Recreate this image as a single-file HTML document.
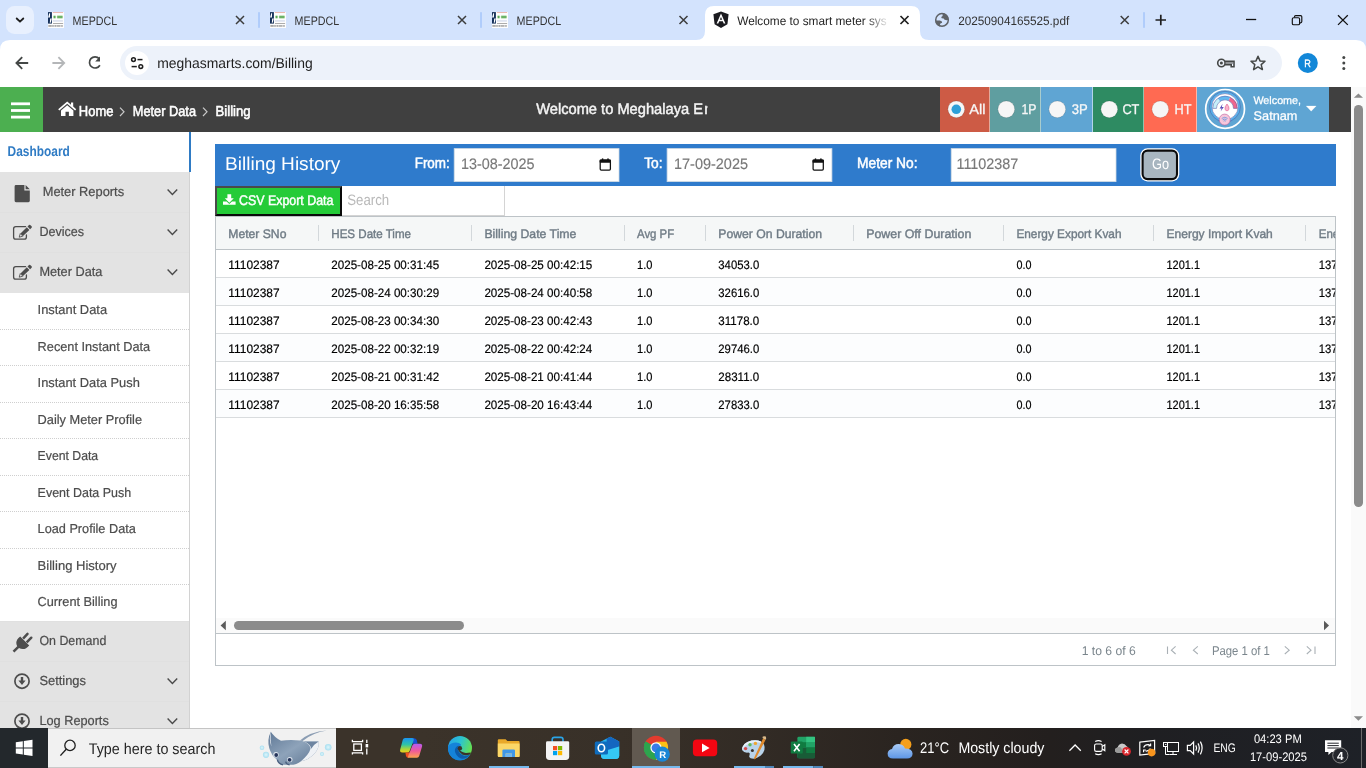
<!DOCTYPE html>
<html>
<head>
<meta charset="utf-8">
<title>Welcome to smart meter system</title>
<style>
*{box-sizing:border-box;margin:0;padding:0}
html,body{width:1366px;height:768px;overflow:hidden;background:#fff;font-family:"Liberation Sans",sans-serif;}
.abs{position:absolute}
svg{will-change:transform;text-rendering:geometricPrecision}
#root{position:relative;width:1366px;height:768px;overflow:hidden;background:#fff}
/* ---------- chrome tab strip ---------- */
#tabstrip{left:0;top:0;width:1366px;height:40px;background:#d3e3fd}
.tabtitle{position:absolute;top:12px;font-size:12.5px;color:#1f1f1f;white-space:nowrap;line-height:16px}
.tabsep{position:absolute;top:13px;width:2px;height:14px;background:#a8c7fa;border-radius:1px}
#toolbar{left:0;top:40px;width:1366px;height:47px;background:#fff}
#omnibox{left:120px;top:46px;width:1162px;height:34px;border-radius:17px;background:#edf2fa}
#url{left:157px;top:54px;font-size:14.5px;color:#1f1f1f;line-height:18px;white-space:nowrap}
/* ---------- app header ---------- */
#apphead{left:0;top:87px;width:1351px;height:45px;background:#404040}
#burger{left:0;top:87px;width:43px;height:45px;background:#4caf50}
.crumb{position:absolute;top:102px;font-size:15px;color:#fff;line-height:18px;white-space:nowrap;font-weight:bold}
.seg{position:absolute;top:87px;height:45px}
.seg span{position:absolute;top:13px;font-size:16px;line-height:18px;color:#f3f3f3}
.radio{position:absolute;top:13px;width:18px;height:18px;border-radius:50%;background:#f7f7f7;box-shadow:0 0 2px rgba(0,0,0,.25)}
/* ---------- sidebar ---------- */
#side{left:0;top:132px;width:190px;height:596px;background:#fff;overflow:hidden}
.mi{position:absolute;left:0;width:189px;height:40px;background:#e3e3e3}
.mi span{position:absolute;top:11px;font-size:15px;line-height:18px;color:#4a4a4a;white-space:nowrap}
.sub{position:absolute;left:0;width:189px;height:37px;background:#fff;border-bottom:1px dotted #d5d5d5}
.sub span{position:absolute;left:37px;top:9px;font-size:14px;line-height:18px;color:#444;white-space:nowrap}
/* ---------- content ---------- */
#bluebar{left:215px;top:144px;width:1121px;height:42px;background:#2f7bcc}
.lbl{position:absolute;top:154px;font-size:15px;font-weight:bold;color:#fff;line-height:18px;white-space:nowrap}
.inp{position:absolute;top:149px;height:32px;background:#fff;border:1px solid #ccc;font-size:15px;color:#7a7a7a;line-height:30px;padding-left:5px;white-space:nowrap}
#grid{left:215px;top:216px;width:1121px;height:450px;border:1px solid #bdc3c7;background:#fff;overflow:hidden}
.hrow{position:absolute;left:0;top:0;width:1119px;height:33px;background:#f5f7f7;border-bottom:1px solid #bdc3c7}
.hc{position:absolute;top:9px;font-size:13px;font-weight:bold;color:#73808a;line-height:16px;white-space:nowrap}
.hs{position:absolute;top:8px;width:1px;height:16px;background:#d4d9dc}
.row{position:absolute;left:0;width:1119px;height:28px;border-bottom:1px solid #d9dcde;background:#fff}
.row.odd{background:#fcfdfe}
.row span{position:absolute;top:6px;font-size:12.5px;line-height:16px;color:#000;white-space:nowrap}
/* ---------- taskbar ---------- */
#taskbar{left:0;top:728px;width:1366px;height:40px;background:#2a2624}
</style>
</head>
<body>
<div id="root">
<div id="tabstrip" class="abs"></div>
<div id="toolbar" class="abs"></div>
<div id="omnibox" class="abs"></div>
<svg class="abs" style="left:0;top:0" width="1366" height="87" viewBox="0 0 1366 87" font-family="Liberation Sans, sans-serif">
  <path d="M0 40 L0 50 Q0 40 10 40 Z" fill="#d3e3fd"/>
  <path d="M1366 40 L1366 50 Q1366 40 1356 40 Z" fill="#d3e3fd"/>
  <!-- tab search button -->
  <rect x="6" y="6" width="28" height="28" rx="8.5" fill="#e8f0fe"/>
  <path d="M16.7 18.5 L20 21.7 L23.3 18.5" fill="none" stroke="#1f1f1f" stroke-width="1.8" stroke-linecap="round" stroke-linejoin="round"/>
  <!-- active tab -->
  <path d="M696 40 Q705 40 705 31 L705 15 Q705 6 714 6 L911 6 Q920 6 920 15 L920 31 Q920 40 929 40 Z" fill="#fff"/>
  <!-- favicons: MEPDCL -->
  
  <g transform="translate(48,12)"><rect x="0" y="0" width="16" height="16" fill="#fdfdfd"/><rect x="0" y="0.1" width="3.9" height="11.5" fill="#14305a"/><path d="M1.2 1.3 L2.1 1.3 L1.9 5.4 L0.1 5.4 Z M2.2 6.4 L3.8 6.4 L2.7 10.8 L1.8 10.8 Z" fill="#fff"/><rect x="4.9" y="0.1" width="10.2" height="0.9" fill="#e9b1a9"/><rect x="5.3" y="3.6" width="2.5" height="2.8" rx="0.6" fill="#9bd191"/><rect x="5.9" y="4.2" width="1.3" height="1.6" fill="#4f9c52"/><rect x="8.9" y="3.6" width="5.9" height="2.8" rx="0.6" fill="#9bd191"/><rect x="9.5" y="4.2" width="4.7" height="1.6" fill="#62ab5e"/><rect x="5" y="8" width="9.9" height="1.8" fill="#dfe4f0"/><rect x="5" y="11" width="10.1" height="0.9" fill="#a3a3a3"/><rect x="0.3" y="13" width="14.7" height="1.8" fill="#d6d6d6"/><rect x="0.5" y="13.4" width="3" height="1.1" fill="#8d8d8d"/><rect x="3.9" y="13.4" width="2.4" height="1.1" fill="#a9a9a9"/><rect x="7" y="13.4" width="1.2" height="1.1" fill="#8d8d8d"/><rect x="9" y="13.4" width="3" height="1.1" fill="#9d9d9d"/><rect x="12.8" y="13.4" width="2" height="1.1" fill="#a9a9a9"/></g>
  <g transform="translate(270,12)"><rect x="0" y="0" width="16" height="16" fill="#fdfdfd"/><rect x="0" y="0.1" width="3.9" height="11.5" fill="#14305a"/><path d="M1.2 1.3 L2.1 1.3 L1.9 5.4 L0.1 5.4 Z M2.2 6.4 L3.8 6.4 L2.7 10.8 L1.8 10.8 Z" fill="#fff"/><rect x="4.9" y="0.1" width="10.2" height="0.9" fill="#e9b1a9"/><rect x="5.3" y="3.6" width="2.5" height="2.8" rx="0.6" fill="#9bd191"/><rect x="5.9" y="4.2" width="1.3" height="1.6" fill="#4f9c52"/><rect x="8.9" y="3.6" width="5.9" height="2.8" rx="0.6" fill="#9bd191"/><rect x="9.5" y="4.2" width="4.7" height="1.6" fill="#62ab5e"/><rect x="5" y="8" width="9.9" height="1.8" fill="#dfe4f0"/><rect x="5" y="11" width="10.1" height="0.9" fill="#a3a3a3"/><rect x="0.3" y="13" width="14.7" height="1.8" fill="#d6d6d6"/><rect x="0.5" y="13.4" width="3" height="1.1" fill="#8d8d8d"/><rect x="3.9" y="13.4" width="2.4" height="1.1" fill="#a9a9a9"/><rect x="7" y="13.4" width="1.2" height="1.1" fill="#8d8d8d"/><rect x="9" y="13.4" width="3" height="1.1" fill="#9d9d9d"/><rect x="12.8" y="13.4" width="2" height="1.1" fill="#a9a9a9"/></g>
  <g transform="translate(492,12)"><rect x="0" y="0" width="16" height="16" fill="#fdfdfd"/><rect x="0" y="0.1" width="3.9" height="11.5" fill="#14305a"/><path d="M1.2 1.3 L2.1 1.3 L1.9 5.4 L0.1 5.4 Z M2.2 6.4 L3.8 6.4 L2.7 10.8 L1.8 10.8 Z" fill="#fff"/><rect x="4.9" y="0.1" width="10.2" height="0.9" fill="#e9b1a9"/><rect x="5.3" y="3.6" width="2.5" height="2.8" rx="0.6" fill="#9bd191"/><rect x="5.9" y="4.2" width="1.3" height="1.6" fill="#4f9c52"/><rect x="8.9" y="3.6" width="5.9" height="2.8" rx="0.6" fill="#9bd191"/><rect x="9.5" y="4.2" width="4.7" height="1.6" fill="#62ab5e"/><rect x="5" y="8" width="9.9" height="1.8" fill="#dfe4f0"/><rect x="5" y="11" width="10.1" height="0.9" fill="#a3a3a3"/><rect x="0.3" y="13" width="14.7" height="1.8" fill="#d6d6d6"/><rect x="0.5" y="13.4" width="3" height="1.1" fill="#8d8d8d"/><rect x="3.9" y="13.4" width="2.4" height="1.1" fill="#a9a9a9"/><rect x="7" y="13.4" width="1.2" height="1.1" fill="#8d8d8d"/><rect x="9" y="13.4" width="3" height="1.1" fill="#9d9d9d"/><rect x="12.8" y="13.4" width="2" height="1.1" fill="#a9a9a9"/></g>
  
  <g fill="#333" font-size="12.3">
    <text x="72.6" y="25" textLength="44.6" lengthAdjust="spacingAndGlyphs">MEPDCL</text>
    <text x="294.6" y="25" textLength="44.6" lengthAdjust="spacingAndGlyphs">MEPDCL</text>
    <text x="516.6" y="25" textLength="44.6" lengthAdjust="spacingAndGlyphs">MEPDCL</text>
    <text x="958.2" y="25" textLength="111" lengthAdjust="spacingAndGlyphs">20250904165525.pdf</text>
  </g>
  <defs><linearGradient id="fade" x1="0" x2="1" y1="0" y2="0"><stop offset="0" stop-color="#1f1f1f"/><stop offset="0.86" stop-color="#1f1f1f"/><stop offset="1" stop-color="#1f1f1f" stop-opacity="0.12"/></linearGradient></defs>
  <text x="737.2" y="25" font-size="12.3" fill="url(#fade)" textLength="149.5" lengthAdjust="spacingAndGlyphs">Welcome to smart meter sys</text>
  <!-- angular favicon -->
  <path d="M721 11.6 L728.6 14.3 L727.4 24.3 L721 27.9 L714.6 24.3 L713.4 14.3 Z" fill="#1a1a1f"/>
  <path d="M721 13.6 L716.6 23.4 L718.3 23.4 L719.2 21.2 L722.8 21.2 L723.7 23.4 L725.4 23.4 Z M721 16.9 L722.2 19.8 L719.8 19.8 Z" fill="#fff" fill-rule="evenodd"/>
  <!-- globe favicon -->
  <circle cx="942" cy="19.9" r="6.3" fill="none" stroke="#5f6368" stroke-width="1.5"/>
  <path d="M942.6 13.3 A6.8 6.8 0 0 1 948.8 19.5 L947 20.2 L945.6 19.9 L944.3 19.5 L943.7 18.6 L941.7 18.2 L941.2 16.9 L942.6 16 Z" fill="#5f6368"/>
  <path d="M935.3 20.4 L939.9 20.4 L941.9 21.5 L942.1 22.8 L940.4 23.4 L939.9 24.8 L940.2 26.5 A6.8 6.8 0 0 1 935.3 20.4 Z" fill="#5f6368"/>
  <!-- close x -->
  <g stroke="#3c3c3c" stroke-width="1.5" stroke-linecap="butt" fill="none">
    <path d="M236 16 L244 24 M244 16 L236 24"/>
    <path d="M458 16 L466 24 M466 16 L458 24"/>
    <path d="M679.5 16 L687.5 24 M687.5 16 L679.5 24"/>
    <path d="M1120.7 16 L1128.7 24 M1128.7 16 L1120.7 24"/>
  </g>
  <path d="M900.5 16 L908.5 24 M908.5 16 L900.5 24" stroke="#1f1f1f" stroke-width="1.7" fill="none"/>
  <!-- separators -->
  <g fill="#a8c7fa"><rect x="258.2" y="12" width="1.6" height="16" rx="0.8"/><rect x="480.2" y="12" width="1.6" height="16" rx="0.8"/><rect x="1143.2" y="12" width="1.6" height="16" rx="0.8"/></g>
  <!-- plus -->
  <path d="M1155.5 20 L1166 20 M1160.8 14.8 L1160.8 25.2" stroke="#1f1f1f" stroke-width="1.7" fill="none"/>
  <!-- window controls -->
  <path d="M1246 19.5 L1256.2 19.5" stroke="#111" stroke-width="1.3" fill="none"/>
  <rect x="1292.3" y="17.7" width="7.3" height="7" rx="1.3" stroke="#111" stroke-width="1.15" fill="none"/><path d="M1294.5 17.4 V16.8 Q1294.5 15.6 1295.7 15.6 H1300.6 Q1301.8 15.6 1301.8 16.8 V21.6 Q1301.8 22.8 1300.6 22.8 H1300" stroke="#111" stroke-width="1.15" fill="none"/>
  <path d="M1338 15.3 L1347.8 24.9 M1347.8 15.3 L1338 24.9" stroke="#111" stroke-width="1.3" fill="none"/>
  <!-- toolbar icons -->
  <path d="M28.2 63 L17 63 M22.2 57.2 L16.4 63 L22.2 68.8" stroke="#444746" stroke-width="1.8" fill="none"/>
  <path d="M52.4 63 L63.6 63 M58.4 57.2 L64.2 63 L58.4 68.8" stroke="#b4b6b8" stroke-width="1.8" fill="none"/>
  <path d="M99.2 58.6 A5.6 5.6 0 1 0 99.9 65.2" stroke="#444746" stroke-width="1.7" fill="none"/>
  <path d="M100 56.6 L100 61.4 L95.2 61.4 Z" fill="#444746"/>
  <circle cx="137" cy="63" r="12" fill="#fff"/>
  <g stroke="#1f1f1f" stroke-width="1.5" fill="none">
    <circle cx="133.5" cy="59.6" r="1.9"/><path d="M137.5 59.6 L142.5 59.6"/>
    <circle cx="140.8" cy="66.6" r="1.9"/><path d="M131.6 66.6 L136.8 66.6"/>
  </g>
  <text x="157.2" y="68" font-size="14.3" fill="#1f1f1f" textLength="155.5" lengthAdjust="spacingAndGlyphs">meghasmarts.com/Billing</text>
  <!-- key -->
  <g stroke="#444746" stroke-width="1.6" fill="none">
    <circle cx="1221.4" cy="63" r="3.7"/><path d="M1225 61.4 L1234 61.4 L1234 66.8 L1231.2 66.8 L1231.2 64.6 L1225 64.6"/><path d="M1225.4 63 L1233.4 63" stroke-width="1.4" stroke="#7a7d80"/>
  </g>
  <circle cx="1221.4" cy="63" r="1.5" fill="#444746"/>
  <!-- star -->
  <path d="M1258 56.2 L1260 60.9 L1265 61.3 L1261.2 64.6 L1262.4 69.6 L1258 66.9 L1253.6 69.6 L1254.8 64.6 L1251 61.3 L1256 60.9 Z" stroke="#444746" stroke-width="1.5" fill="none" stroke-linejoin="round"/>
  <!-- avatar -->
  <circle cx="1307.8" cy="63" r="10" fill="#1287d8"/>
  <text x="1304.3" y="66.9" font-size="10.6" fill="#fff" stroke="#fff" stroke-width="0.35" textLength="6.6" lengthAdjust="spacingAndGlyphs">R</text>
  <!-- menu -->
  <g fill="#444746"><circle cx="1343.8" cy="57.6" r="1.5"/><circle cx="1343.8" cy="63" r="1.5"/><circle cx="1343.8" cy="68.4" r="1.5"/></g>
</svg>


<div id="apphead" class="abs"></div>
<div id="burger" class="abs"></div>
<div class="seg" style="left:940px;width:50px;background:#cd5b45;border-right:1px solid #e3a99b"></div>
<div class="seg" style="left:990px;width:51px;background:#5f9ea0;border-right:1px solid #a9cccd"></div>
<div class="seg" style="left:1041px;width:52px;background:#5fa5d3;border-right:1px solid #b3d4ea"></div>
<div class="seg" style="left:1093px;width:51px;background:#2e8b62;border-right:1px solid #8fc3ab"></div>
<div class="seg" style="left:1144px;width:53px;background:#ff6a52;border-right:1px solid #ffb5a6"></div>
<div class="seg" style="left:1197px;width:132px;background:#5fa5d3"></div>
<svg class="abs" style="left:0;top:87px" width="1351" height="45" viewBox="0 87 1351 45" font-family="Liberation Sans, sans-serif">
  <!-- hamburger -->
  <g fill="#fff"><rect x="11" y="102.4" width="19" height="2.8"/><rect x="11" y="109.1" width="19" height="2.8"/><rect x="11" y="115.7" width="19" height="2.8"/></g>
  <!-- home icon -->
  <path d="M67.2 101.6 L58.2 109.2 L59.3 110.4 L67.2 103.8 L75.1 110.4 L76.2 109.2 L73.2 106.6 L73.2 102.4 L71 102.4 L71 104.8 Z" fill="#fff"/>
  <path d="M67.2 105.2 L61 110.4 L61 115.9 L65.5 115.9 L65.5 111.8 L68.9 111.8 L68.9 115.9 L73.4 115.9 L73.4 110.4 Z" fill="#fff"/>
  <g fill="#fff" stroke="#fff" stroke-width="0.55" font-size="14.4">
    <text x="78.8" y="116" textLength="34.6" lengthAdjust="spacingAndGlyphs">Home</text>
    <text x="132.8" y="116" textLength="63.2" lengthAdjust="spacingAndGlyphs">Meter Data</text>
    <text x="215.6" y="116" textLength="35" lengthAdjust="spacingAndGlyphs">Billing</text>
  </g>
  <g stroke="#c9c9c9" stroke-width="1.2" fill="none"><path d="M120 107.6 L124 111.8 L120 116"/><path d="M203 107.6 L207 111.8 L203 116"/></g>
  <!-- marquee -->
  <clipPath id="mq"><rect x="530" y="90" width="177.5" height="40"/></clipPath>
  <g clip-path="url(#mq)" fill="#f4f4f4" stroke="#f4f4f4" stroke-width="0.45" font-size="15.2">
    <text x="536.2" y="113.8" textLength="166.8" lengthAdjust="spacingAndGlyphs">Welcome to Meghalaya E</text>
    <text x="704.2" y="113.8">n</text>
  </g>
  <!-- radios -->
  <g fill="#f6f6f6">
    <circle cx="956.3" cy="109.3" r="8.4"/><circle cx="1006.3" cy="109.3" r="8.4"/><circle cx="1057.3" cy="109.3" r="8.4"/><circle cx="1109.3" cy="109.3" r="8.4"/><circle cx="1160.3" cy="109.3" r="8.4"/>
  </g>
  <g fill="none" stroke="rgba(0,0,0,0.13)" stroke-width="1">
    <circle cx="956.3" cy="109.3" r="8.4"/><circle cx="1006.3" cy="109.3" r="8.4"/><circle cx="1057.3" cy="109.3" r="8.4"/><circle cx="1109.3" cy="109.3" r="8.4"/><circle cx="1160.3" cy="109.3" r="8.4"/>
  </g>
  <circle cx="956.3" cy="109.3" r="4.8" fill="#2d9fd8"/>
  <g fill="#f7f7f7" stroke="#f7f7f7" stroke-width="0.3" font-size="14.1">
    <text x="969.2" y="113.7" textLength="16.2" lengthAdjust="spacingAndGlyphs">All</text>
    <text x="1021.4" y="113.7" textLength="15" lengthAdjust="spacingAndGlyphs">1P</text>
    <text x="1071.8" y="113.7" textLength="16" lengthAdjust="spacingAndGlyphs">3P</text>
    <text x="1122.4" y="113.7" textLength="17" lengthAdjust="spacingAndGlyphs">CT</text>
    <text x="1174.6" y="113.7" textLength="17" lengthAdjust="spacingAndGlyphs">HT</text>
  </g>
  <!-- avatar -->
  <circle cx="1225.1" cy="108.9" r="19.4" fill="none" stroke="#fff" stroke-width="1.7"/>
  <circle cx="1225" cy="106.7" r="14.3" fill="#fff" stroke="#56b1ea" stroke-width="2.2"/>
  <circle cx="1225" cy="106.7" r="15.4" fill="none" stroke="#4f55a0" stroke-width="0.5"/>
  <circle cx="1225" cy="106.7" r="13.1" fill="none" stroke="#4f55a0" stroke-width="0.5"/>
  <path d="M1214.6 108.4 A10.4 10.4 0 0 1 1219 99.9" fill="none" stroke="#c6effa" stroke-width="3.8"/>
  <path d="M1219 99.9 A10.4 10.4 0 0 1 1229.4 99" fill="none" stroke="#63b9f0" stroke-width="3.8"/>
  <path d="M1229.4 99 A10.4 10.4 0 0 1 1235.4 108.4" fill="none" stroke="#f0668c" stroke-width="3.8"/>
  <path d="M1212.7 108.4 A12.3 12.3 0 0 1 1237.3 108.4 L1233.5 108.4 A8.5 8.5 0 0 0 1216.5 108.4 Z" fill="none" stroke="#4f55a0" stroke-width="0.5"/>
  <path d="M1222.6 103.8 L1219.6 108.4 L1221.6 108.4 L1220.6 111.6 L1223.8 107 L1221.8 107 Z" fill="#5b4fb8"/>
  <path d="M1227 104 q2.4 2.8 2 5 q-0.4 1.8 -2 1.8 q-1.6 0 -2 -1.8 q-0.4 -2.2 2 -5 Z" fill="#f9b4cb" stroke="#e0558a" stroke-width="0.6"/>
  <circle cx="1224.7" cy="119.6" r="5.5" fill="#f7c6db" stroke="#b85f9c" stroke-width="0.6"/>
  <path d="M1221.8 118.4 q2.9 -2.2 5.8 0 M1222.7 119.8 q2 -1.5 4 0 M1223.6 121.1 q1.1 -0.8 2.2 0" fill="none" stroke="#4a8fe0" stroke-width="0.7"/>
  <g fill="#fff" stroke="#fff" stroke-width="0.25">
    <text x="1253.4" y="103.5" font-size="10.8" textLength="47.7" lengthAdjust="spacingAndGlyphs">Welcome,</text>
    <text x="1253.6" y="119.8" font-size="12.6" textLength="43.8" lengthAdjust="spacingAndGlyphs">Satnam</text>
    <path d="M1306.2 106 L1316.2 106 L1311.2 111.2 Z"/>
  </g>
</svg>

<div class="abs" style="left:0;top:132px;width:190px;height:596px;background:#fff;border-right:1px solid #d2d2d2"></div>
<div class="abs" style="left:189px;top:132px;width:2px;height:40px;background:#2f7bc4"></div>
<div class="abs" style="left:0;top:172px;width:189px;height:40px;background:#e3e3e3"></div>
<div class="abs" style="left:0;top:212px;width:189px;height:40px;background:#e3e3e3;border-top:1px solid #e0e0e0"></div>
<div class="abs" style="left:0;top:252px;width:189px;height:40.6px;background:#e3e3e3;border-top:1px solid #e0e0e0"></div>
<div class="abs" style="left:0;top:621.3px;width:189px;height:40px;background:#e3e3e3;border-top:1px solid #e0e0e0"></div>
<div class="abs" style="left:0;top:661.3px;width:189px;height:40px;background:#e3e3e3;border-top:1px solid #e0e0e0"></div>
<div class="abs" style="left:0;top:701.3px;width:189px;height:40px;background:#e3e3e3;border-top:1px solid #e0e0e0"></div>
<div class="abs" style="left:0;top:328.6px;width:189px;height:0;border-top:1px dotted #cfcfcf"></div>
<div class="abs" style="left:0;top:365.2px;width:189px;height:0;border-top:1px dotted #cfcfcf"></div>
<div class="abs" style="left:0;top:401.7px;width:189px;height:0;border-top:1px dotted #cfcfcf"></div>
<div class="abs" style="left:0;top:438.2px;width:189px;height:0;border-top:1px dotted #cfcfcf"></div>
<div class="abs" style="left:0;top:474.8px;width:189px;height:0;border-top:1px dotted #cfcfcf"></div>
<div class="abs" style="left:0;top:511.3px;width:189px;height:0;border-top:1px dotted #cfcfcf"></div>
<div class="abs" style="left:0;top:547.8px;width:189px;height:0;border-top:1px dotted #cfcfcf"></div>
<div class="abs" style="left:0;top:584.3px;width:189px;height:0;border-top:1px dotted #cfcfcf"></div>
<svg class="abs" style="left:0;top:132px" width="190" height="596" viewBox="0 132 190 596" font-family="Liberation Sans, sans-serif">
<text x="7.6" y="156.2" font-size="14.2" font-weight="bold" fill="#2f7bc4" textLength="62.2" lengthAdjust="spacingAndGlyphs">Dashboard</text>
<g fill="#4c4c4c" stroke="#4c4c4c" stroke-width="0.22" font-size="13.1">
<text x="42.7" y="195.8" textLength="81.4" lengthAdjust="spacingAndGlyphs">Meter Reports</text>
<text x="39.4" y="235.8" textLength="44.6" lengthAdjust="spacingAndGlyphs">Devices</text>
<text x="39.4" y="275.8" textLength="63.0" lengthAdjust="spacingAndGlyphs">Meter Data</text>
<text x="39.4" y="644.8" textLength="66.9" lengthAdjust="spacingAndGlyphs">On Demand</text>
<text x="39.4" y="684.8" textLength="46.6" lengthAdjust="spacingAndGlyphs">Settings</text>
<text x="39.4" y="724.9" textLength="69.4" lengthAdjust="spacingAndGlyphs">Log Reports</text>
</g>
<g fill="#4c4c4c" stroke="#4c4c4c" stroke-width="0.2" font-size="13">
<text x="37.6" y="313.9" textLength="69.5" lengthAdjust="spacingAndGlyphs">Instant Data</text>
<text x="37.6" y="350.8" textLength="112.6" lengthAdjust="spacingAndGlyphs">Recent Instant Data</text>
<text x="37.6" y="386.9" textLength="102.2" lengthAdjust="spacingAndGlyphs">Instant Data Push</text>
<text x="37.6" y="423.8" textLength="104.4" lengthAdjust="spacingAndGlyphs">Daily Meter Profile</text>
<text x="37.6" y="459.9" textLength="60.6" lengthAdjust="spacingAndGlyphs">Event Data</text>
<text x="37.6" y="496.6" textLength="93.6" lengthAdjust="spacingAndGlyphs">Event Data Push</text>
<text x="37.6" y="532.9" textLength="98.2" lengthAdjust="spacingAndGlyphs">Load Profile Data</text>
<text x="37.6" y="569.9" textLength="79.0" lengthAdjust="spacingAndGlyphs">Billing History</text>
<text x="37.6" y="605.9" textLength="79.9" lengthAdjust="spacingAndGlyphs">Current Billing</text>
</g>
<g fill="none" stroke="#4a4a4a" stroke-width="1.4">
<path d="M167.6 189.4 L172.4 194.4 L177.2 189.4"/>
<path d="M167.6 229.4 L172.4 234.4 L177.2 229.4"/>
<path d="M167.6 269.4 L172.4 274.4 L177.2 269.4"/>
<path d="M167.6 678.4 L172.4 683.4 L177.2 678.4"/>
<path d="M167.6 718.4 L172.4 723.4 L177.2 718.4"/>
</g>
<path d="M14.6 186.4 q0 -1.4 1.4 -1.4 L24.4 185 L24.4 190.4 L29.8 190.4 L29.8 200.8 q0 1.4 -1.4 1.4 L16 202.2 q-1.4 0 -1.4 -1.4 Z M25.6 185 L29.8 189.2 L25.6 189.2 Z" fill="#4d4d4d"/>
<g transform="translate(0,0)">
<path d="M25.6 226.6 L15.8 226.6 q-2.2 0 -2.2 2.2 L13.6 236.9 q0 2.2 2.2 2.2 L24.2 239.1 q2.2 0 2.2 -2.2 L26.4 234.9" fill="none" stroke="#4d4d4d" stroke-width="1.3" stroke-linecap="round"/>
<path d="M20.3 233.6 L22.8 236.2 L19.2 237.2 Z" fill="#f4f4f4" stroke="#4d4d4d" stroke-width="0.9" stroke-linejoin="round"/>
<path d="M20.5 233.4 L26.8 227.3 L29.4 229.9 L23 236 Z" fill="#4d4d4d"/>
<path d="M27.5 226.6 L29 225.1 q0.8 -0.6 1.5 0.1 l1.1 1.1 q0.7 0.8 0 1.5 L30.1 229.3 Z" fill="#4d4d4d"/>
</g>
<g transform="translate(0,40)">
<path d="M25.6 226.6 L15.8 226.6 q-2.2 0 -2.2 2.2 L13.6 236.9 q0 2.2 2.2 2.2 L24.2 239.1 q2.2 0 2.2 -2.2 L26.4 234.9" fill="none" stroke="#4d4d4d" stroke-width="1.3" stroke-linecap="round"/>
<path d="M20.3 233.6 L22.8 236.2 L19.2 237.2 Z" fill="#f4f4f4" stroke="#4d4d4d" stroke-width="0.9" stroke-linejoin="round"/>
<path d="M20.5 233.4 L26.8 227.3 L29.4 229.9 L23 236 Z" fill="#4d4d4d"/>
<path d="M27.5 226.6 L29 225.1 q0.8 -0.6 1.5 0.1 l1.1 1.1 q0.7 0.8 0 1.5 L30.1 229.3 Z" fill="#4d4d4d"/>
</g>
<g fill="#4d4d4d"><path d="M20.2 636.4 L29.2 645.4 q-4.6 5.6 -10.2 2.6 L14.4 652.6 L12.6 650.8 L17.2 646.2 q-2.8 -5.4 3 -9.8 Z"/><path d="M23.4 637.4 L27.8 632.6 q1 -0.8 1.8 0 q0.8 1 0 1.8 L25.2 639.2 Z M27 641 L31.6 636.4 q1 -0.8 1.8 0 q0.8 1 0 1.8 L28.8 642.8 Z" transform="translate(-1.2,0.4)"/></g>
<circle cx="22" cy="681.2" r="7.1" fill="none" stroke="#4d4d4d" stroke-width="1.7"/>
<path d="M20.8 677.0 h2.4 v3.6 h2.4 L22 685.0 L18.4 680.6 h2.4 Z" fill="#4d4d4d"/>
<circle cx="22" cy="721.2" r="7.1" fill="none" stroke="#4d4d4d" stroke-width="1.7"/>
<path d="M20.8 717.0 h2.4 v3.6 h2.4 L22 725.0 L18.4 720.6 h2.4 Z" fill="#4d4d4d"/>
</svg>

<div id="bluebar" class="abs"></div>
<div class="abs" style="left:215px;top:186px;width:127px;height:29.5px;background:#25cb38;border:2.5px solid;border-color:#4a4a4a #0a0a0a #0a0a0a #4a4a4a"></div>
<div class="abs" style="left:342px;top:186px;width:163px;height:29.5px;background:#fff;border-right:1px solid #d4d4d4;border-bottom:1px solid #d4d4d4"></div>
<div class="abs" style="left:215px;top:216px;width:1121px;height:450px;border:1px solid #bdc3c7;background:#fff"></div>
<div class="abs" style="left:216px;top:217px;width:1119px;height:32px;background:#f5f7f7"></div>
<div class="abs" style="left:216px;top:249px;width:1119px;height:1px;background:#bdc3c7"></div>
<div class="abs" style="left:216px;top:250px;width:1119px;height:28px;background:#fff;border-bottom:1px solid #d9dcde"></div>
<div class="abs" style="left:216px;top:278px;width:1119px;height:28px;background:#fcfdfe;border-bottom:1px solid #d9dcde"></div>
<div class="abs" style="left:216px;top:306px;width:1119px;height:28px;background:#fff;border-bottom:1px solid #d9dcde"></div>
<div class="abs" style="left:216px;top:334px;width:1119px;height:28px;background:#fcfdfe;border-bottom:1px solid #d9dcde"></div>
<div class="abs" style="left:216px;top:362px;width:1119px;height:28px;background:#fff;border-bottom:1px solid #d9dcde"></div>
<div class="abs" style="left:216px;top:390px;width:1119px;height:28px;background:#fcfdfe;border-bottom:1px solid #d9dcde"></div>
<div class="abs" style="left:318.0px;top:225px;width:1px;height:16px;background:#d3d8db"></div>
<div class="abs" style="left:471.0px;top:225px;width:1px;height:16px;background:#d3d8db"></div>
<div class="abs" style="left:624.0px;top:225px;width:1px;height:16px;background:#d3d8db"></div>
<div class="abs" style="left:705.0px;top:225px;width:1px;height:16px;background:#d3d8db"></div>
<div class="abs" style="left:853.0px;top:225px;width:1px;height:16px;background:#d3d8db"></div>
<div class="abs" style="left:1003.0px;top:225px;width:1px;height:16px;background:#d3d8db"></div>
<div class="abs" style="left:1153.0px;top:225px;width:1px;height:16px;background:#d3d8db"></div>
<div class="abs" style="left:1305.0px;top:225px;width:1px;height:16px;background:#d3d8db"></div>
<div class="abs" style="left:216px;top:618px;width:1119px;height:15px;background:#fafafa"></div>
<div class="abs" style="left:216px;top:633px;width:1119px;height:1px;background:#bdc3c7"></div>
<div class="abs" style="left:233.6px;top:620.8px;width:230.4px;height:9.4px;background:#8b8b8b;border-radius:4.7px"></div>
<svg class="abs" style="left:215px;top:144px" width="1121" height="522" viewBox="215 144 1121 522" font-family="Liberation Sans, sans-serif">
<clipPath id="gc"><rect x="216" y="217" width="1119.2" height="448"/></clipPath>
<g fill="#fff" stroke="#d3dbe3" stroke-width="0.8"><rect x="454.2" y="148.6" width="164.8" height="33"/><rect x="667.1" y="148.6" width="164.8" height="33"/><rect x="951.2" y="148.6" width="164.8" height="33"/></g>
<rect x="1140.3" y="148.3" width="39" height="33.1" rx="7.2" fill="#fff"/>
<rect x="1142.6" y="150.6" width="34.4" height="28.5" rx="5" fill="#a8b6c0" stroke="#0b0b0b" stroke-width="2.1"/>
<text x="225" y="170.2" font-size="18.6" fill="#fff" textLength="115.4" lengthAdjust="spacingAndGlyphs">Billing History</text>
<g fill="#fff" font-size="15" stroke="#fff" stroke-width="0.5">
<text x="414.7" y="167.9" textLength="35.1" lengthAdjust="spacingAndGlyphs">From:</text>
<text x="644.2" y="167.9" textLength="18.4" lengthAdjust="spacingAndGlyphs">To:</text>
<text x="857.0" y="167.9" textLength="60.6" lengthAdjust="spacingAndGlyphs">Meter No:</text>
</g>
<g fill="#787878" stroke="#787878" stroke-width="0.15" font-size="15.2">
<text x="461.0" y="169.1" textLength="73.6" lengthAdjust="spacingAndGlyphs">13-08-2025</text>
<text x="674.0" y="169.1" textLength="74.0" lengthAdjust="spacingAndGlyphs">17-09-2025</text>
<text x="956.5" y="169.1" textLength="61.8" lengthAdjust="spacingAndGlyphs">11102387</text>
</g>
<rect x="600.2" y="160.2" width="10.2" height="10" rx="1.1" fill="none" stroke="#111" stroke-width="1.25"/>
<rect x="599.6" y="159.6" width="11.4" height="3.2" rx="0.8" fill="#111"/>
<rect x="601.9" y="158.4" width="1.4" height="2" fill="#111"/><rect x="607.3" y="158.4" width="1.4" height="2" fill="#111"/>
<rect x="813.1" y="160.2" width="10.2" height="10" rx="1.1" fill="none" stroke="#111" stroke-width="1.25"/>
<rect x="812.5" y="159.6" width="11.4" height="3.2" rx="0.8" fill="#111"/>
<rect x="814.8" y="158.4" width="1.4" height="2" fill="#111"/><rect x="820.2" y="158.4" width="1.4" height="2" fill="#111"/>
<text x="1152" y="169.1" font-size="15.2" fill="#fff" textLength="17" lengthAdjust="spacingAndGlyphs">Go</text>
<g fill="#fff"><path d="M227.4 194.3 h3.8 v4 h2.6 l-4.5 4.5 l-4.5 -4.5 h2.6 Z"/><path d="M223 201.4 h3.6 l2.7 2.6 l2.7 -2.6 h3.6 v3.4 h-12.6 Z"/></g>
<text x="239" y="204.9" font-size="14" fill="#fff" stroke="#fff" stroke-width="0.45" textLength="94.4" lengthAdjust="spacingAndGlyphs">CSV Export Data</text>
<text x="347.2" y="204.9" font-size="15.2" fill="#b9b9b9" textLength="42" lengthAdjust="spacingAndGlyphs">Search</text>
<g clip-path="url(#gc)">
<g fill="#6f7b85" stroke="#6f7b85" stroke-width="0.4" font-size="12.4">
<text x="228.3" y="237.9" textLength="58.1" lengthAdjust="spacingAndGlyphs">Meter SNo</text>
<text x="331.3" y="237.9" textLength="79.7" lengthAdjust="spacingAndGlyphs">HES Date Time</text>
<text x="484.4" y="237.9" textLength="92.0" lengthAdjust="spacingAndGlyphs">Billing Date Time</text>
<text x="637.0" y="237.9" textLength="37.1" lengthAdjust="spacingAndGlyphs">Avg PF</text>
<text x="718.3" y="237.9" textLength="103.7" lengthAdjust="spacingAndGlyphs">Power On Duration</text>
<text x="866.2" y="237.9" textLength="105.1" lengthAdjust="spacingAndGlyphs">Power Off Duration</text>
<text x="1016.4" y="237.9" textLength="105.1" lengthAdjust="spacingAndGlyphs">Energy Export Kvah</text>
<text x="1166.5" y="237.9" textLength="106.3" lengthAdjust="spacingAndGlyphs">Energy Import Kvah</text>
<text x="1318.7" y="237.9" textLength="36.6" lengthAdjust="spacingAndGlyphs">Energy</text>
</g>
<g fill="#000" stroke="#000" stroke-width="0.18" font-size="12.3">
<text x="228.3" y="268.9" textLength="51.3" lengthAdjust="spacingAndGlyphs">11102387</text>
<text x="331.3" y="268.9" textLength="107.8" lengthAdjust="spacingAndGlyphs">2025-08-25 00:31:45</text>
<text x="484.4" y="268.9" textLength="107.9" lengthAdjust="spacingAndGlyphs">2025-08-25 00:42:15</text>
<text x="637.0" y="268.9" textLength="15.4" lengthAdjust="spacingAndGlyphs">1.0</text>
<text x="718.3" y="268.9" textLength="40.9" lengthAdjust="spacingAndGlyphs">34053.0</text>
<text x="1016.4" y="268.9" textLength="15.0" lengthAdjust="spacingAndGlyphs">0.0</text>
<text x="1166.5" y="268.9" textLength="33.5" lengthAdjust="spacingAndGlyphs">1201.1</text>
<text x="1318.7" y="268.9" textLength="25.2" lengthAdjust="spacingAndGlyphs">1372</text>
<text x="228.3" y="296.9" textLength="51.3" lengthAdjust="spacingAndGlyphs">11102387</text>
<text x="331.3" y="296.9" textLength="107.8" lengthAdjust="spacingAndGlyphs">2025-08-24 00:30:29</text>
<text x="484.4" y="296.9" textLength="107.9" lengthAdjust="spacingAndGlyphs">2025-08-24 00:40:58</text>
<text x="637.0" y="296.9" textLength="15.4" lengthAdjust="spacingAndGlyphs">1.0</text>
<text x="718.3" y="296.9" textLength="40.9" lengthAdjust="spacingAndGlyphs">32616.0</text>
<text x="1016.4" y="296.9" textLength="15.0" lengthAdjust="spacingAndGlyphs">0.0</text>
<text x="1166.5" y="296.9" textLength="33.5" lengthAdjust="spacingAndGlyphs">1201.1</text>
<text x="1318.7" y="296.9" textLength="25.2" lengthAdjust="spacingAndGlyphs">1372</text>
<text x="228.3" y="324.9" textLength="51.3" lengthAdjust="spacingAndGlyphs">11102387</text>
<text x="331.3" y="324.9" textLength="107.8" lengthAdjust="spacingAndGlyphs">2025-08-23 00:34:30</text>
<text x="484.4" y="324.9" textLength="107.9" lengthAdjust="spacingAndGlyphs">2025-08-23 00:42:43</text>
<text x="637.0" y="324.9" textLength="15.4" lengthAdjust="spacingAndGlyphs">1.0</text>
<text x="718.3" y="324.9" textLength="40.9" lengthAdjust="spacingAndGlyphs">31178.0</text>
<text x="1016.4" y="324.9" textLength="15.0" lengthAdjust="spacingAndGlyphs">0.0</text>
<text x="1166.5" y="324.9" textLength="33.5" lengthAdjust="spacingAndGlyphs">1201.1</text>
<text x="1318.7" y="324.9" textLength="25.2" lengthAdjust="spacingAndGlyphs">1372</text>
<text x="228.3" y="352.9" textLength="51.3" lengthAdjust="spacingAndGlyphs">11102387</text>
<text x="331.3" y="352.9" textLength="107.8" lengthAdjust="spacingAndGlyphs">2025-08-22 00:32:19</text>
<text x="484.4" y="352.9" textLength="107.9" lengthAdjust="spacingAndGlyphs">2025-08-22 00:42:24</text>
<text x="637.0" y="352.9" textLength="15.4" lengthAdjust="spacingAndGlyphs">1.0</text>
<text x="718.3" y="352.9" textLength="40.9" lengthAdjust="spacingAndGlyphs">29746.0</text>
<text x="1016.4" y="352.9" textLength="15.0" lengthAdjust="spacingAndGlyphs">0.0</text>
<text x="1166.5" y="352.9" textLength="33.5" lengthAdjust="spacingAndGlyphs">1201.1</text>
<text x="1318.7" y="352.9" textLength="25.2" lengthAdjust="spacingAndGlyphs">1372</text>
<text x="228.3" y="380.9" textLength="51.3" lengthAdjust="spacingAndGlyphs">11102387</text>
<text x="331.3" y="380.9" textLength="107.8" lengthAdjust="spacingAndGlyphs">2025-08-21 00:31:42</text>
<text x="484.4" y="380.9" textLength="107.9" lengthAdjust="spacingAndGlyphs">2025-08-21 00:41:44</text>
<text x="637.0" y="380.9" textLength="15.4" lengthAdjust="spacingAndGlyphs">1.0</text>
<text x="718.3" y="380.9" textLength="40.9" lengthAdjust="spacingAndGlyphs">28311.0</text>
<text x="1016.4" y="380.9" textLength="15.0" lengthAdjust="spacingAndGlyphs">0.0</text>
<text x="1166.5" y="380.9" textLength="33.5" lengthAdjust="spacingAndGlyphs">1201.1</text>
<text x="1318.7" y="380.9" textLength="25.2" lengthAdjust="spacingAndGlyphs">1372</text>
<text x="228.3" y="408.9" textLength="51.3" lengthAdjust="spacingAndGlyphs">11102387</text>
<text x="331.3" y="408.9" textLength="107.8" lengthAdjust="spacingAndGlyphs">2025-08-20 16:35:58</text>
<text x="484.4" y="408.9" textLength="107.9" lengthAdjust="spacingAndGlyphs">2025-08-20 16:43:44</text>
<text x="637.0" y="408.9" textLength="15.4" lengthAdjust="spacingAndGlyphs">1.0</text>
<text x="718.3" y="408.9" textLength="40.9" lengthAdjust="spacingAndGlyphs">27833.0</text>
<text x="1016.4" y="408.9" textLength="15.0" lengthAdjust="spacingAndGlyphs">0.0</text>
<text x="1166.5" y="408.9" textLength="33.5" lengthAdjust="spacingAndGlyphs">1201.1</text>
<text x="1318.7" y="408.9" textLength="25.2" lengthAdjust="spacingAndGlyphs">1372</text>
</g>
</g>
<path d="M225.8 620.8 L225.8 630.2 L220.6 625.5 Z" fill="#5a5a5a"/>
<path d="M1324 620.8 L1324 630.2 L1329 625.5 Z" fill="#5a5a5a"/>
<g fill="#7a858c" font-size="12.6">
<text x="1081.7" y="654.8" textLength="54" lengthAdjust="spacingAndGlyphs">1 to 6 of 6</text>
<text x="1211.9" y="654.8" textLength="58" lengthAdjust="spacingAndGlyphs">Page 1 of 1</text>
</g>
<g fill="none" stroke="#a9b0b5" stroke-width="1.1">
<path d="M1167.5 646.4 V654 M1175.6 646.4 L1171.4 650.2 L1175.6 654"/>
<path d="M1197.8 646.4 L1193.4 650.2 L1197.8 654"/>
<path d="M1284.8 646.4 L1289.2 650.2 L1284.8 654"/>
<path d="M1315 646.4 V654 M1306.8 646.4 L1311 650.2 L1306.8 654"/>
</g>
</svg>

<div class="abs" style="left:1351px;top:87px;width:15px;height:641px;background:#fafafa"></div>
<div class="abs" style="left:1354.3px;top:104.6px;width:8.8px;height:402px;background:#8b8b8b;border-radius:4.4px"></div>
<svg class="abs" style="left:1351px;top:87px" width="15" height="641" viewBox="1351 87 15 641"><path d="M1353.8 97.8 L1363 97.8 L1358.4 93.4 Z" fill="#8b8b8b"/><path d="M1353.8 716.2 L1363 716.2 L1358.4 720.8 Z" fill="#8b8b8b"/></svg>

<div class="abs" style="left:0;top:728px;width:1366px;height:40px;background:linear-gradient(90deg,#3b332a 0px,#3b332a 420px,#383028 620px,#322b25 760px,#2a2420 900px,#231f1e 1050px,#1f1f22 1150px,#1e2127 1366px)"></div>
<div class="abs" style="left:0;top:728px;width:48px;height:40px;background:#23282c"></div>
<div class="abs" style="left:48px;top:728px;width:288px;height:40px;background:#f1f1f1;border-top:1px solid #c4c4c4;border-bottom:1px solid #c9c9c9"></div>
<div class="abs" style="left:632px;top:728px;width:48px;height:40px;background:#615950"></div>
<svg class="abs" style="left:0;top:728px" width="1366" height="40" viewBox="0 728 1366 40" font-family="Liberation Sans, sans-serif">
  <defs>
    <linearGradient id="cop" x1="0" y1="0" x2="1" y2="1"><stop offset="0" stop-color="#2f8df0"/><stop offset="0.35" stop-color="#35c58a"/><stop offset="0.55" stop-color="#f5c33b"/><stop offset="0.8" stop-color="#f2603c"/><stop offset="1" stop-color="#c655d8"/></linearGradient>
    <linearGradient id="cop2" x1="0" y1="0" x2="1" y2="1"><stop offset="0" stop-color="#3a6df0"/><stop offset="0.5" stop-color="#b25bdc"/><stop offset="1" stop-color="#f06a8a"/></linearGradient>
    <linearGradient id="edg" x1="0" y1="0.1" x2="1" y2="0.5"><stop offset="0" stop-color="#27a2ea"/><stop offset="0.5" stop-color="#2cc4d0"/><stop offset="1" stop-color="#66e24e"/></linearGradient>
    <linearGradient id="copL" x1="0" y1="0" x2="0" y2="1"><stop offset="0" stop-color="#1a94f2"/><stop offset="0.45" stop-color="#2fc4a8"/><stop offset="0.75" stop-color="#a6d63e"/><stop offset="1" stop-color="#f6cf16"/></linearGradient><linearGradient id="copR" x1="0" y1="0" x2="0" y2="1"><stop offset="0" stop-color="#b45cf2"/><stop offset="0.5" stop-color="#f0589a"/><stop offset="1" stop-color="#ffa44e"/></linearGradient><linearGradient id="ray" x1="0" y1="0" x2="1" y2="1"><stop offset="0" stop-color="#5f7896"/><stop offset="0.5" stop-color="#8ea3ba"/><stop offset="1" stop-color="#5b7390"/></linearGradient>
    <linearGradient id="cld" x1="0" y1="0" x2="0" y2="1"><stop offset="0" stop-color="#a9cbf5"/><stop offset="1" stop-color="#5d96e6"/></linearGradient>
    <radialGradient id="bub"><stop offset="0" stop-color="#dff6fb"/><stop offset="1" stop-color="#a7def0"/></radialGradient>
  </defs>
  <!-- windows logo -->
  <path d="M15.8 742.2 L22.8 741.2 L22.8 747.4 L15.8 747.4 Z M23.8 741 L32.5 739.8 L32.5 747.4 L23.8 747.4 Z M15.8 748.4 L22.8 748.4 L22.8 754.6 L15.8 753.6 Z M23.8 748.4 L32.5 748.4 L32.5 756 L23.8 754.8 Z" fill="#fff"/>
  <!-- search icon -->
  <circle cx="70" cy="745.4" r="5.2" fill="none" stroke="#1f1f1f" stroke-width="1.3"/>
  <path d="M66.2 749.2 L60.4 755.6" stroke="#1f1f1f" stroke-width="1.4"/>
  <text x="88.7" y="753.6" font-size="15.4" fill="#262626" textLength="126.7" lengthAdjust="spacingAndGlyphs">Type here to search</text>
  <!-- manta ray -->
  <circle cx="262" cy="747.7" r="2.3" fill="url(#bub)"/><circle cx="266" cy="754.8" r="3.1" fill="url(#bub)"/><circle cx="328.2" cy="747.2" r="3.3" fill="url(#bub)"/><circle cx="322" cy="754" r="2" fill="url(#bub)"/>
  <path d="M326.8 730.4 Q312 732.8 302.6 741 L300 740.4 Q310 731.6 326.8 730.4 Z" fill="#8b9db3"/>
  <path d="M270.8 731.8 Q274.6 737.6 281 740.8 Q290 739.2 300.4 740.6 L303.8 741.6 L318.6 741.4 Q319.6 747.6 314.6 753.4 Q309 759.6 301 761.2 Q296.6 765 289.6 764.8 L282.6 764.8 Q277.4 763.6 276.6 759.6 Q271.4 755.4 269.2 748 Q267 739.6 270.8 731.8 Z" fill="url(#ray)"/>
  <path d="M303.8 741.6 L318.6 741.4 Q319.6 747.6 314.6 753.4 Q309 759.6 301 761.2 Q309 754.6 310.6 748.6 Q309.4 743.6 303.8 741.6 Z" fill="#eef1f5"/>
  <path d="M303.8 741.6 Q310.6 744 311.2 748.8 Q313.6 744.4 318.6 741.4 Z" fill="#6d84a0"/>
  <path d="M270.8 731.8 Q268.6 739 271.4 746.4 Q270.2 739 270.8 731.8 Z" fill="#e4e9ef"/>
  <circle cx="276" cy="754.8" r="2.7" fill="#dfe6ee"/><circle cx="276.2" cy="755" r="1.9" fill="#24345a"/>
  <circle cx="289.8" cy="759.6" r="2.7" fill="#dfe6ee"/><circle cx="289.6" cy="759.8" r="1.9" fill="#24345a"/>
  <path d="M277.4 759.6 Q278.2 763.8 283 764.8 M285.6 761.6 Q286.4 764.4 289.6 764.8" fill="none" stroke="#4a5f7e" stroke-width="1.3"/>
  <!-- task view -->
  <g fill="none" stroke="#fff" stroke-width="1.3"><path d="M352.4 739.8 V741.6 H362.6 V739.8 M352.4 754.6 V752.8 H362.6 V754.6"/><rect x="353.8" y="744" width="7.6" height="6.4"/><path d="M366.8 739.8 V743 M366.8 748.6 V754.6"/></g>
  <rect x="365.6" y="744" width="2.6" height="3.4" fill="#fff"/>
  <!-- copilot -->
  <path d="M411.4 738 L415.2 738.4 Q416.4 738.8 416.8 740.2 L417.6 743.8 L412.6 743.8 Z" fill="#1650d6"/>
  <path d="M405 738 L412 738 Q414.4 738 413.6 740.4 L409.6 751 Q409 752.6 407.2 752.6 L402.4 752.6 Q399.4 752.4 400.2 749.6 L402.8 739.8 Q403.4 738 405 738 Z" fill="url(#copL)"/>
  <path d="M405.4 752.4 L410.4 752.4 L408.4 757.6 L407.6 757.7 Q406.4 757.4 406 756 Z" fill="#f0501e"/>
  <path d="M414.8 743.8 L419.8 743.8 Q422.8 744 422 746.8 L419.2 756 Q418.6 757.8 417 757.8 L408 757.8 Q407.6 757.6 408.4 755.4 L412.4 745.4 Q413 743.8 414.8 743.8 Z" fill="url(#copR)"/>
  <!-- edge -->
  <circle cx="460" cy="747.9" r="12" fill="url(#edg)"/>
  <path d="M448.1 746 Q451 742.8 455.9 742.5 Q459.4 742.6 460.8 744.2 Q461.6 745.6 459.8 746.2 Q457.6 747.4 457.8 749.6 Q459 753.6 464.4 755.6 Q468 755.6 470.4 754.2 A12 12 0 0 1 448.1 746 Z" fill="#1583d9"/>
  <path d="M458.5 745.4 Q454.4 747.4 454.9 751 Q455.6 756 461 758.6 Q466 759.4 470.2 754.4 Q467 756.2 463.4 755.6 Q459.4 754 458 749.6 Q457.4 747 458.5 745.4 Z" fill="#0d5cab"/>
  <circle cx="459.9" cy="748.2" r="2.2" fill="#3a322a"/>
  <path d="M458.4 749 Q461.6 752.6 466 753 L470.8 752.4 L470.6 754.2 Q466 755.9 462.6 754.7 Q459.2 753 458 749.6 Z" fill="#3a322a"/>
  <!-- file explorer -->
  <path d="M497.8 740.2 Q497.8 739.2 498.8 739.2 L505.6 739.2 L507.4 741 L518.6 741 Q519.6 741 519.6 742 L519.6 756 Q519.6 757 518.6 757 L498.8 757 Q497.8 757 497.8 756 Z" fill="#e9a92a"/>
  <path d="M497.8 743.6 L519.6 743.6 L519.6 756 Q519.6 757 518.6 757 L498.8 757 Q497.8 757 497.8 756 Z" fill="#fbd768"/>
  <path d="M502.4 757 L502.4 750.6 Q502.4 749.4 503.6 749.4 L513.8 749.4 Q515 749.4 515 750.6 L515 757 L511.8 757 L511.8 753.6 L505.6 753.6 L505.6 757 Z" fill="#3f97e8"/>
  <rect x="505.6" y="753.6" width="6.2" height="3.4" fill="#6cb6f5"/>
  <!-- store -->
  <path d="M552.2 742 L552.2 739.6 Q552.2 737.4 554.4 737.4 L560.8 737.4 Q563 737.4 563 739.6 L563 742" fill="none" stroke="#2aa5e8" stroke-width="1.6"/>
  <path d="M546 742.6 Q546 741.2 547.4 741.2 L567.8 741.2 Q569.2 741.2 569.2 742.6 L569.2 756.6 Q569.2 760 565.8 760 L549.4 760 Q546 760 546 756.6 Z" fill="#f4f4f4"/>
  <rect x="553" y="746" width="4.2" height="4.2" fill="#f25022"/><rect x="558" y="746" width="4.2" height="4.2" fill="#7fba00"/><rect x="553" y="751" width="4.2" height="4.2" fill="#00a4ef"/><rect x="558" y="751" width="4.2" height="4.2" fill="#ffb900"/>
  <!-- outlook -->
  <path d="M601 741.4 L610.4 736.8 L619.2 741.4 L619.2 755.6 Q619.2 759 615.8 759 L604.6 759 Q601 759 601 755.6 Z" fill="#29b6f0"/>
  <path d="M610.4 736.8 L619.2 741.4 L619.2 746.4 L606.6 752.8 L606.6 738.6 Z" fill="#1466c0"/>
  <path d="M601 752 L619.2 746.4 L619.2 755.6 Q619.2 759 615.8 759 L604.6 759 Q601 759 601 755.6 Z" fill="#35c8f5"/>
  <rect x="594.8" y="741.4" width="13.2" height="13.2" rx="1.6" fill="#0f6cbd"/>
  <ellipse cx="601.4" cy="748" rx="3.2" ry="3.7" fill="none" stroke="#fff" stroke-width="1.6"/>
  <!-- chrome -->
  <circle cx="656" cy="747.8" r="12.1" fill="#e33b2e"/>
  <path d="M656 747.8 L645.6 741.6 A12.1 12.1 0 0 0 650 758.3 Z" fill="#2da44e"/>
  <path d="M656 747.8 L650 758.3 A12.1 12.1 0 0 1 645.6 741.6 Z" fill="#2da44e"/>
  <path d="M656 747.8 L645.5 741.8 A12.1 12.1 0 0 0 656 759.9 L662 749.4 Z" fill="#2da44e"/>
  <path d="M656 747.8 L668 747.8 A12.1 12.1 0 0 1 656 759.9 L662 749.4 Z" fill="#fbc116"/>
  <path d="M656 741.8 L666.5 741.8 A12.1 12.1 0 0 1 668.1 747.8 A12.1 12.1 0 0 1 656 759.9 L661.2 750.8 Z" fill="#fbc116"/>
  <circle cx="656" cy="747.8" r="5.6" fill="#fff"/><circle cx="656" cy="747.8" r="4.4" fill="#3b7be8"/>
  <circle cx="662.2" cy="754.2" r="7.6" fill="#1a86d6"/>
  <text x="659.2" y="757.8" font-size="9.6" font-weight="bold" fill="#fff">R</text>
  <!-- youtube -->
  <rect x="692.9" y="739.5" width="24.3" height="16.8" rx="4" fill="#f40612"/>
  <path d="M702 743.6 L709.6 747.9 L702 752.2 Z" fill="#fff"/>
  <!-- paint -->
  <path d="M742 750 Q742.4 742.8 751.4 740.6 Q760.6 739 764 744.6 Q766.4 750.4 760.8 755.6 Q755.6 759.8 750.6 758.2 Q748.4 757 749.6 755 Q750.4 753 748.4 752.6 Q744.4 753.4 742 750 Z" fill="#b9d3ea"/>
  <path d="M742 750 Q742.4 742.8 751.4 740.6 Q760.6 739 764 744.6 Q761 741.4 753 742.6 Q744.6 744.6 742 750 Z" fill="#e8f1f9"/>
  <circle cx="745.6" cy="748.6" r="1.7" fill="#d64a4a"/><circle cx="750" cy="744.8" r="1.7" fill="#5cb85c"/><circle cx="755.4" cy="743.4" r="1.7" fill="#f0a630"/><circle cx="752.4" cy="750.6" r="1.5" fill="#3a332d"/>
  <path d="M763 738.4 L765.6 739.8 L755.8 758.6 L754.4 759.6 L754.2 757.8 Z" fill="#e08a2c"/>
  <path d="M762.4 737 Q763.4 735.6 765.8 736.6 Q766.6 738.4 765.8 739.8 L763 738.4 Z" fill="#d9b98a"/>
  <!-- excel -->
  <rect x="797.4" y="736.8" width="17.6" height="21.4" rx="1.4" fill="#21a366"/>
  <rect x="806.2" y="736.8" width="8.8" height="5.4" fill="#33c481"/><rect x="797.4" y="742.2" width="8.8" height="5.4" fill="#107c41"/><rect x="806.2" y="742.2" width="8.8" height="5.4" fill="#21a366"/><rect x="797.4" y="747.6" width="17.6" height="5.4" fill="#185c37"/><rect x="806.2" y="747.6" width="8.8" height="5.4" fill="#107c41"/><rect x="797.4" y="753" width="17.6" height="5.2" fill="#185c37"/>
  <rect x="790.8" y="741.6" width="12" height="12" rx="1.2" fill="#107c41"/>
  <path d="M794 744 L799.6 751.2 M799.6 744 L794 751.2" stroke="#fff" stroke-width="1.6"/>
  <!-- underlines -->
  <g fill="#76b9ed"><rect x="489" y="766" width="40" height="2"/><rect x="632" y="766" width="48" height="2"/><rect x="734" y="766" width="31" height="2"/><rect x="783" y="766" width="30.4" height="2"/></g>
  <g fill="#4f86b8"><rect x="765" y="766" width="9" height="2"/><rect x="813.4" y="766" width="9.6" height="2"/></g>
  <!-- weather -->
  <circle cx="905.8" cy="744.4" r="5.6" fill="#f59f1a"/>
  <path d="M893 758.6 Q887.6 758.4 887.6 753.4 Q888 749.6 892 749 Q893.6 743.8 899 744 Q903.4 744.4 905 748.4 Q912.4 748.4 912.6 753.8 Q912.2 758.6 907 758.6 Z" fill="url(#cld)"/>
  <g fill="#fff" font-size="15.4">
    <text x="920" y="753.2" textLength="29" lengthAdjust="spacingAndGlyphs">21°C</text>
    <text x="958.4" y="753.2" textLength="86" lengthAdjust="spacingAndGlyphs">Mostly cloudy</text>
  </g>
  <path d="M1069.4 750.7 L1075.1 745 L1080.8 750.7" fill="none" stroke="#fff" stroke-width="1.25"/>
  <!-- meet now -->
  <g fill="none" stroke="#fff" stroke-width="1.15"><rect x="1094.6" y="744" width="7.6" height="7.4" rx="1.6"/><path d="M1102.2 746.4 L1104.8 744.8 L1104.8 750.6 L1102.2 749"/><path d="M1095.2 741.6 Q1098.4 739.8 1101.6 741.6 M1095.2 753.8 Q1098.4 755.6 1101.6 753.8"/></g>
  <!-- onedrive cloud w/ x -->
  <path d="M1118.2 752.8 Q1114.8 752.6 1115 749.8 Q1115.4 747.6 1117.6 747.4 Q1118.6 743.8 1122 743.4 Q1125.2 743.4 1126.4 746 Q1128.6 747 1128 750 L1126 752.8 Z" fill="#c9c9c9"/>
  <path d="M1118.2 752.8 Q1114.8 752.6 1115 749.8 Q1115.4 747.6 1117.6 747.4 Q1119.4 746.4 1121 747.6 L1123.4 752.8 Z" fill="#9a9a9a"/>
  <circle cx="1126.5" cy="751.4" r="4.4" fill="#d9262c"/>
  <path d="M1124.6 749.5 L1128.4 753.3 M1128.4 749.5 L1124.6 753.3" stroke="#fff" stroke-width="1.2"/>
  <!-- sync icon -->
  <g fill="none" stroke="#fff" stroke-width="1.2"><path d="M1139.8 742.2 L1154.6 740.4 L1154.6 753.4 L1139.8 755 Z"/><path d="M1143.6 747.4 Q1145 744.4 1148.4 744.6 L1150.4 745.2 M1150.6 743.4 L1150.6 745.6 L1148.4 745.8 M1150.4 748.6 Q1149 751.4 1145.6 751 M1143.6 752.2 L1143.6 750 L1145.8 750"/></g>
  <circle cx="1151.6" cy="752.6" r="3.8" fill="#f7941d"/>
  <!-- network -->
  <g fill="none" stroke="#fff" stroke-width="1"><rect x="1167.5" y="742.5" width="11" height="9"/><path d="M1173 751.5 V754.5 M1169.5 754.5 H1177"/><rect x="1163.5" y="742.5" width="4" height="4" fill="#22232a"/><path d="M1165.5 746.5 V754.5 H1169.5"/><path d="M1165 744.5 H1166.4" stroke-width="0.9"/></g>
  <!-- volume -->
  <g fill="none" stroke="#fff" stroke-width="1.2"><path d="M1187.4 745.4 H1190.2 L1193.6 742 V754 L1190.2 750.6 H1187.4 Z"/><path d="M1195.8 745.4 Q1197.4 748 1195.8 750.6 M1198 743.4 Q1200.6 748 1198 752.6 M1200.4 741.6 Q1203.8 748 1200.4 754.4"/></g>
  <g fill="#fff" font-size="12.4">
    <text x="1213.5" y="751.9" textLength="22.3" lengthAdjust="spacingAndGlyphs">ENG</text>
    <text x="1253.9" y="742.5" textLength="47.8" lengthAdjust="spacingAndGlyphs">04:23 PM</text>
    <text x="1249.9" y="760.5" textLength="57.1" lengthAdjust="spacingAndGlyphs">17-09-2025</text>
  </g>
  <!-- notifications -->
  <path d="M1325 740.2 H1341.2 V752 H1331.6 L1328.4 755 V752 H1325 Z" fill="#fff"/>
  <path d="M1327.4 743.2 H1338.8 M1327.4 745.6 H1338.8 M1327.4 748 H1338.8" stroke="#25272d" stroke-width="1"/>
  <circle cx="1340.3" cy="755.4" r="7.6" fill="#25272d" stroke="#8a8a8a" stroke-width="1"/>
  <text x="1337" y="759.6" font-size="11.6" font-weight="bold" fill="#fff">4</text>
  <rect x="1361" y="728" width="1" height="40" fill="#6a6a6a"/>
</svg>

</div>
</body>
</html>
